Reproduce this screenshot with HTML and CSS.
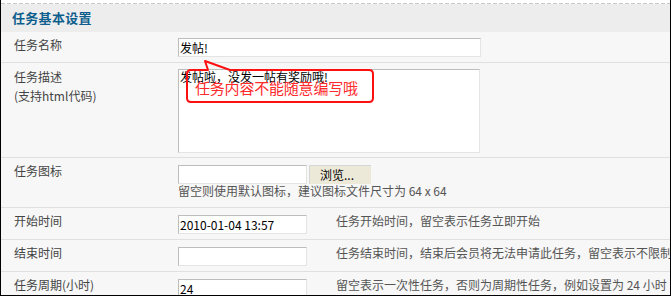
FILE: index.html
```html
<!DOCTYPE html>
<html lang="zh-CN">
<head>
<meta charset="utf-8">
<title>任务基本设置</title>
<link rel="stylesheet" href="styles.css">
</head>
<body>
<div class="frame">
  <div class="dash"></div>
  <div class="head">任务基本设置</div>

  <div class="row r1">
    <div class="label">任务名称</div>
    <div class="field"><input class="txt wide" type="text" value="发帖!"></div>
  </div>

  <div class="row r2">
    <div class="label tall">任务描述<br>(支持html代码)</div>
    <div class="field"><textarea class="area">发帖啦，没发一帖有奖励哦!</textarea></div>
  </div>

  <div class="row r3">
    <div class="label">任务图标</div>
    <div class="field">
      <div class="filebox"><span class="fileinput"></span><span class="btn">浏览...</span></div>
      <div class="note">留空则使用默认图标，建议图标文件尺寸为 64 x 64</div>
    </div>
  </div>

  <div class="row r4">
    <div class="label">开始时间</div>
    <div class="field short"><input class="txt" type="text" value="2010-01-04 13:57"></div>
    <div class="hint">任务开始时间，留空表示任务立即开始</div>
  </div>

  <div class="row r4">
    <div class="label">结束时间</div>
    <div class="field short"><input class="txt" type="text" value=""></div>
    <div class="hint">任务结束时间，结束后会员将无法申请此任务，留空表示不限制</div>
  </div>

  <div class="row r4 last">
    <div class="label">任务周期(小时)</div>
    <div class="field short"><input class="txt" type="text" value="24"></div>
    <div class="hint">留空表示一次性任务，否则为周期性任务，例如设置为 24 小时</div>
  </div>

  <div class="callout">
    <svg class="bubble" width="671" height="120" viewBox="0 0 671 120">
      <path d="M208 70 L191 70 Q187 70 187 74 L187 98 Q187 102 191 102 L369 102 Q373 102 373 98 L373 74 Q373 70 369 70 L230 70 L205 61 Z" fill="none" stroke="#ff1010" stroke-width="2" stroke-linejoin="round"/>
    </svg>
    <div class="ctext">任务内容不能随意编写哦</div>
  </div>
</div>
</body>
</html>
```

FILE: styles.css
```css
html, body {
  margin: 0;
  padding: 0;
  background: #fff;
}
body {
  font-family: "Noto Sans CJK SC", "Liberation Sans", sans-serif;
  font-size: 12px;
  color: #444;
}
.frame {
  position: relative;
  width: 671px;
  height: 296px;
  box-sizing: border-box;
  border-left: 1px solid #000;
  border-right: 1px solid #000;
  border-bottom: 1px solid #000;
  padding-top: 3px;
  overflow: hidden;
  background: #fff;
}
.dash {
  height: 1px;
  background: repeating-linear-gradient(90deg, #c8c8c8 0 4px, transparent 4px 6px);
}
.head {
  height: 28px;
  line-height: 28px;
  background: #ededed;
  padding-left: 11px;
  font-size: 13px;
  font-weight: bold;
  color: #0f5f8e;
  letter-spacing: 0.3px;
}
.row {
  display: flex;
  align-items: flex-start;
  background: #f7f7f7;
  border-bottom: 1px solid #e0e0e0;
  box-sizing: border-box;
  padding-top: 4px;
  white-space: nowrap;
}
.r1 { height: 31px; }
.r2 { height: 95px; }
.r3 { height: 50px; }
.r4 { height: 32px; }
.last { border-bottom: none; }
.label {
  width: 177px;
  flex: none;
  box-sizing: border-box;
  padding-left: 13px;
  line-height: 18px;
  color: #444;
}
.label.tall { line-height: 19px; }
.field {
  padding-top: 2px;
}
.r3 .field, .r4 .field { padding-top: 3px; }
.field.short { width: 158px; flex: none; }
.txt {
  display: block;
  box-sizing: border-box;
  width: 129px;
  height: 19px;
  margin: 0;
  padding: 0 1px;
  border: 1px solid #e4e4e4;
  border-top-color: #bdbdbd;
  border-left-color: #bdbdbd;
  background: #fff;
  font-family: "Noto Sans CJK SC", "Liberation Sans", sans-serif;
  font-size: 12px;
  line-height: 17px;
  color: #000;
  outline: none;
}
.txt.wide { width: 303px; }
.area {
  display: block;
  box-sizing: border-box;
  width: 302px;
  height: 84px;
  margin: 0;
  padding: 0 1px;
  border: 1px solid #e4e4e4;
  border-top-color: #bdbdbd;
  border-left-color: #bdbdbd;
  background: #fff;
  font-family: "Noto Sans CJK SC", "Liberation Sans", sans-serif;
  font-size: 12px;
  line-height: 13px;
  color: #000;
  resize: none;
  outline: none;
}
.filebox {
  display: flex;
  gap: 2px;
  height: 19px;
}
.fileinput {
  display: block;
  box-sizing: border-box;
  width: 129px;
  height: 19px;
  border: 1px solid #e4e4e4;
  border-top-color: #bdbdbd;
  border-left-color: #bdbdbd;
  background: #fff;
}
.btn {
  display: block;
  box-sizing: border-box;
  width: 62px;
  height: 19px;
  background: #ece9d8;
  border-top: 1px solid #d6d6d6;
  border-left: 1px solid #d6d6d6;
  color: #000;
  line-height: 17px;
  padding-left: 10px;
}
.note {
  margin-top: -1px;
  line-height: 16px;
  color: #555;
}
.hint {
  line-height: 18px;
  color: #555;
}
.callout {
  position: absolute;
  left: 0;
  top: 0;
  width: 671px;
  height: 120px;
  pointer-events: none;
}
.bubble {
  position: absolute;
  left: -1px;
  top: 0;
}
.ctext {
  position: absolute;
  left: 194px;
  top: 78px;
  font-size: 15px;
  line-height: 20px;
  color: #ff2a2a;
  letter-spacing: -0.2px;
}
```
